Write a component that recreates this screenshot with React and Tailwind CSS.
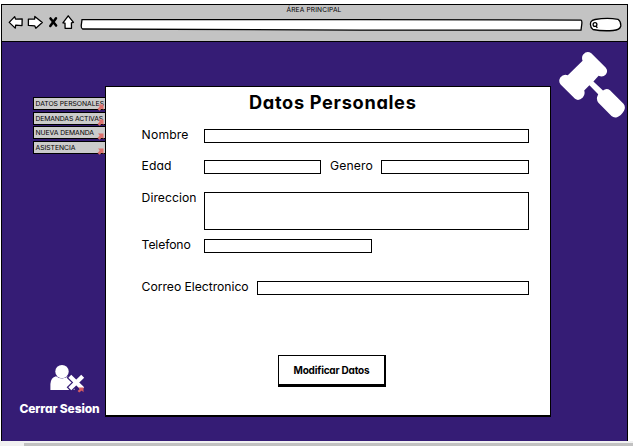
import React from 'react';

const NAV = [
  { label: 'DATOS PERSONALES', width: 68.5 },
  { label: 'DEMANDAS ACTIVAS', width: 67.5 },
  { label: 'NUEVA DEMANDA', width: 58.5 },
  { label: 'ASISTENCIA', width: 40 },
];

function FitText({ children, width, size, className = '', weight = 400 }) {
  const ref = React.useRef(null);
  const [spacing, setSpacing] = React.useState(0);
  React.useLayoutEffect(() => {
    const natural = ref.current.getBoundingClientRect().width;
    setSpacing((width - natural) / children.length);
  }, [width, children]);
  return (
    <span
      ref={ref}
      className={`inline-block shrink-0 whitespace-nowrap [font-feature-settings:'cv11'] ${className}`}
      style={{ letterSpacing: spacing, fontSize: size, fontWeight: weight }}
    >
      {children}
    </span>
  );
}

function Label({ width, children }) {
  return <FitText width={width} size={12.2} className="ml-[0.6px] leading-[12px]">{children}</FitText>;
}

function Field({ className }) {
  return <div className={`shrink-0 border border-black bg-white ${className}`} />;
}

function LinkMark({ className = '' }) {
  return (
    <svg className={className} width="7" height="7" viewBox="0 0 7 7" fill="#dd716d">
      <path d="M1 0.5h5.5V6L4.8 4.6 2.6 6.8 0.5 4.9 2.7 2.5Z" />
    </svg>
  );
}

function Toolbar() {
  return (
    <div className="flex h-[17px] items-start">
      <svg className="ml-[6px]" width="68" height="17" viewBox="8 14 68 17" fill="white" stroke="black" strokeWidth="1.3" strokeLinejoin="round">
        <path d="M9.2 22.4 14.7 16.6 15.5 19.1 22.2 18.8 22 25.6 15.7 25.2 15.2 28.1Z" />
        <path d="M28.4 19.1 34.7 19 34.8 16.4 42.3 22.6 35.8 28.2 34.7 25.8 28.4 25.4Z" />
        <path d="M50.5 18.4 56.1 25.6M56 18.2 50.3 26" fill="none" strokeWidth="2.5" strokeLinecap="round" />
        <path d="M68.2 15.8 73.5 22.3 71.4 22.8 71.5 28.3H65.1L65 23.1 62.9 22.8Z" />
      </svg>
      <svg className="ml-[4px]" width="504" height="17" viewBox="80 14 504 17" fill="white" stroke="black" strokeWidth="1.3">
        <path d="M82 19.6H360L581 20.1Q582.2 20.5 581.8 24L581 30.1H360L82.5 29Q81 28.5 81.3 25Z" />
      </svg>
      <svg className="ml-[5px]" width="34" height="18" viewBox="589 14 34 18" fill="white" stroke="black" strokeWidth="1.3">
        <path d="M595 19.5Q607 17.3 618 19.3 621 21.4 620.8 26 620 30 613 30.5 602 31.3 593 29.5 589.5 27 590.8 22 592 20 595 19.5Z" />
        <circle cx="595" cy="24.5" r="1.9" />
        <path d="M596 26.3 597.4 27.8" />
      </svg>
    </div>
  );
}

function Gavel() {
  return (
    <svg width="68" height="68" viewBox="559 51 68 68" fill="white">
      <path d="M583.2 54.5Q587 50.3 591.3 53.3L605.6 67.4Q608.5 71 605.8 74.4 603 77.8 598.6 75.8L593.4 81.4 603 90.5Q606.5 87.6 610 90.3L623.5 103.8Q626 107 624 110.8 621 116 617 117.2 613.8 118 611.5 116L598.4 102.7Q595.7 99 597.8 95.2L598.2 94.3 589.4 85.2 584.2 90.5Q585.5 94.4 582.8 97.5 578.6 101.5 575 98.8L560.6 84.5Q558 81 560.3 77.4 563.3 73.7 567.8 75.2L582.6 60.8Q581.2 57 583.2 54.5Z" />
    </svg>
  );
}

function Logout() {
  return (
    <div className="flex flex-col items-start">
      <svg className="ml-[31px]" width="36" height="30" viewBox="49 364 36 30">
        <path d="M50.4 390V384Q50.8 377.5 56 376.2 62 380.5 68.4 376.3 73 378 74.5 384V390Z" fill="white" />
        <circle cx="62" cy="371.6" r="6.7" fill="white" />
        <path d="M71.3 377.7 81.2 387.3M81.2 377.7 71.3 387.3" stroke="#351c75" strokeWidth="6.6" strokeLinecap="square" />
        <path d="M71.3 377.7 81.2 387.3M81.2 377.7 71.3 387.3" stroke="white" strokeWidth="4.2" strokeLinecap="square" />
        <path d="M78.3 387.4H83.5V392.2L81.7 390.6 79.2 392.6 77.6 391 79.7 389Z" fill="#d75c62" />
      </svg>
      <FitText width={80} size={12} weight={800} className="mt-[7px] ml-[1.5px] leading-[16px] text-white">Cerrar Sesion</FitText>
    </div>
  );
}

export default function App() {
  return (
    <div className="flex h-[446px] w-[633px] flex-col overflow-hidden bg-white pt-[4px] font-['Inter',sans-serif] text-black">
      <div className="ml-px flex h-[437px] w-[627px] flex-col border-x border-t border-black bg-[#351c75]">
        <header className="h-[37px] shrink-0 border-b border-black bg-[#c3c3c3]">
          <div className="flex h-[9px] justify-center pr-[1px]">
            <FitText width={55} size={6.6} className="leading-[11px]">ÁREA PRINCIPAL</FitText>
          </div>
          <Toolbar />
        </header>
        <div className="flex flex-1">
          <aside className="flex w-[103px] shrink-0 flex-col pt-[55px]">
            <nav className="ml-[31px] flex flex-col gap-[1.6px]">
              {NAV.map((item) => (
                <div key={item.label} className="relative flex h-[13px] items-center border border-r-0 border-black bg-[#cbcbcb] pl-[1.5px]">
                  <FitText width={item.width} size={6.8} className="leading-[11px]">{item.label}</FitText>
                  <LinkMark className="absolute right-[1px] bottom-[-2px]" />
                </div>
              ))}
            </nav>
            <div className="mt-[210px] ml-[16px]">
              <Logout />
            </div>
          </aside>
          <main className="mt-[44px] flex h-[331px] w-[446px] shrink-0 flex-col border border-b-2 border-black bg-white">
            <h1 className="flex h-[31px] pl-[143px]">
              <FitText width={167.5} size={18.2} weight={700} className="leading-[31px]">Datos Personales</FitText>
            </h1>
            <div className="mt-[11px] flex h-[14px] items-start pl-[35px]">
              <div className="flex w-[63px]"><Label width={47}>Nombre</Label></div>
              <Field className="h-[14px] w-[325px]" />
            </div>
            <div className="mt-[17px] flex h-[14px] items-start pl-[35px]">
              <div className="flex w-[63px]"><Label width={30}>Edad</Label></div>
              <Field className="h-[14px] w-[117px]" />
              <div className="flex w-[60px] pl-[8.4px]"><Label width={43}>Genero</Label></div>
              <Field className="h-[14px] w-[148px]" />
            </div>
            <div className="mt-[18px] flex h-[38px] items-start pl-[35px]">
              <div className="flex w-[63px]"><Label width={55}>Direccion</Label></div>
              <Field className="h-[38px] w-[325px]" />
            </div>
            <div className="mt-[9px] flex h-[14px] items-start pl-[35px]">
              <div className="flex w-[63px]"><Label width={49}>Telefono</Label></div>
              <Field className="h-[14px] w-[168px]" />
            </div>
            <div className="mt-[28px] flex h-[14px] items-start pl-[35px]">
              <div className="flex w-[116px]"><Label width={107}>Correo Electronico</Label></div>
              <Field className="h-[14px] w-[272px]" />
            </div>
            <button className="mt-[60px] ml-[172px] flex h-[32px] w-[108px] items-center justify-center border border-r-2 border-b-[3px] border-black bg-white">
              <FitText width={76} size={10} weight={700} className="mt-px">Modificar Datos</FitText>
            </button>
          </main>
          <div className="w-[76px] pt-[9px] pl-[8px]">
            <Gavel />
          </div>
        </div>
      </div>
      <footer className="h-[5px] w-[633px] bg-[#f1f1f1] pt-[2px] pl-[24px]">
        <div className="h-[3px] bg-[#c1c1c1]" />
      </footer>
    </div>
  );
}
